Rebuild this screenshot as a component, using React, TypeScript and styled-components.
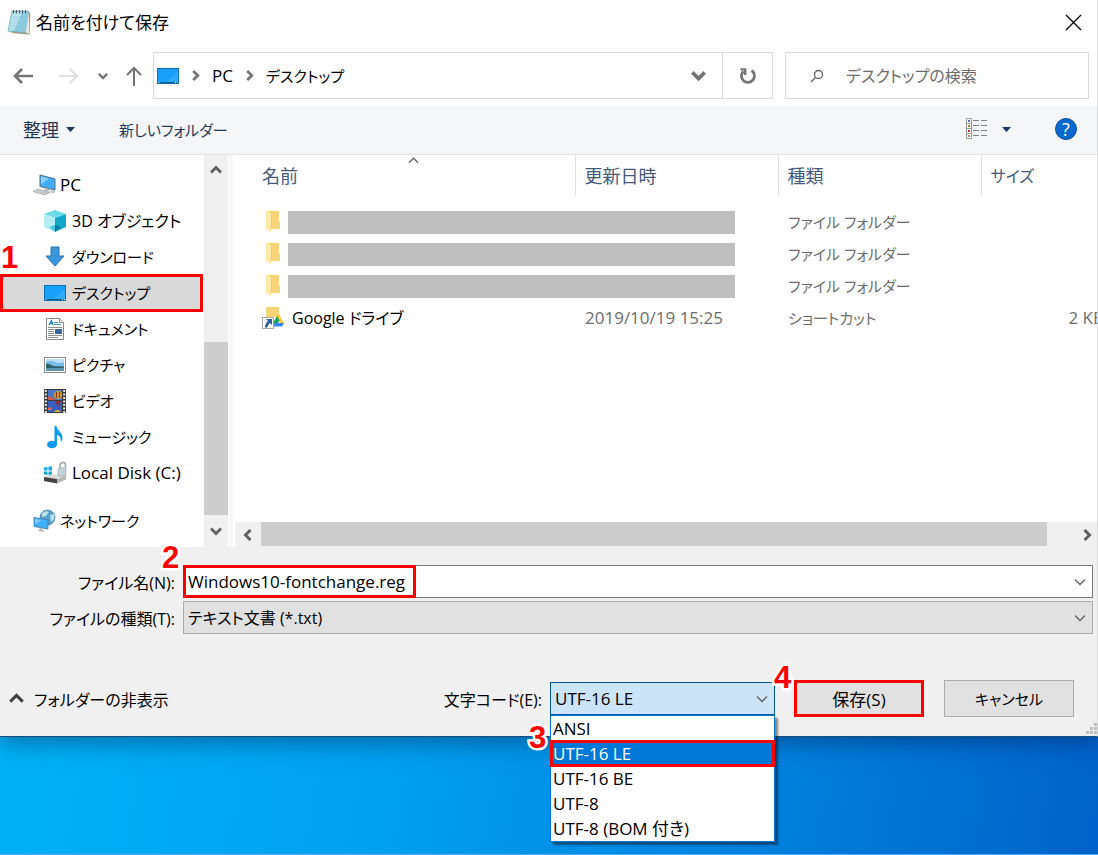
import React, { useState } from "react";
import styled, { createGlobalStyle, css } from "styled-components";

const RED = "#ff0000";

const GlobalStyle = createGlobalStyle`
  *, *::before, *::after { box-sizing: border-box; }
  body { margin: 0; }
  body, button, input, select {
    font-family: "Open Sans", "Noto Sans CJK JP", sans-serif;
    font-size: 17px;
    font-feature-settings: "palt";
    color: #000;
  }
  svg { display: block; flex: none; }
`;

const Desktop = styled.div`
  min-height: 100vh;
  overflow: hidden;
  border-bottom: 1px solid #5ba9e4;
  background: linear-gradient(100deg, #00b4f8 0%, #00b0f6 14%, #00a0f0 42%, #0084e0 70%, #0062cc 100%);
`;

const Dialog = styled.main`
  display: flex;
  flex-direction: column;
  background: #fff;
  border-right: 1px solid #dcdcdc;
  border-bottom: 1px solid #17507c;
  box-shadow: 0 3px 24px rgba(0, 20, 60, 0.5);
`;

const TitleBar = styled.header`
  display: flex;
  align-items: center;
  gap: 4px;
  height: 44px;
  padding: 0 14px 0 7px;
`;

const Title = styled.h1`
  flex: 1;
  margin: 0;
  padding-bottom: 2px;
  font-size: 17px;
  font-weight: 400;
`;

type TextSize = { $size?: 15 | 16 | 17 | 18 };

const PlainButton = styled.button<TextSize>`
  display: flex;
  align-items: center;
  justify-content: center;
  gap: 7px;
  padding: 0;
  border: 0;
  background: none;
  font-size: ${(p) => p.$size ?? 17}px;
`;

const ToggleButton = styled(PlainButton)`
  gap: 10px;
`;

const NavBar = styled.nav`
  display: flex;
  align-items: center;
  padding: 8px 8px 7px 13px;
`;

const NavButtons = styled.div`
  display: grid;
  grid-template-columns: 46px 39px 28px 27px;
  align-items: center;
  justify-items: start;
`;

const AddressBox = styled.div`
  display: flex;
  flex: 1;
  align-items: stretch;
  height: 47px;
  border: 1px solid #d9d9d9;
`;

const Crumbs = styled.div`
  display: flex;
  flex: 1;
  align-items: center;
  gap: 11px;
  padding: 0 16px 0 3px;
`;

const Crumb = styled.a<TextSize>`
  color: #000;
  font-size: ${(p) => p.$size ?? 17}px;
  text-decoration: none;
`;

const Spacer = styled.span`
  flex: 1;
`;

const RefreshButton = styled(PlainButton)`
  width: 50px;
  border-left: 1px solid #d9d9d9;
`;

const SearchBox = styled.label`
  display: flex;
  align-items: center;
  gap: 22px;
  width: 304px;
  height: 47px;
  margin-left: 12px;
  padding-left: 24px;
  border: 1px solid #d9d9d9;
`;

const SearchInput = styled.input`
  flex: 1;
  min-width: 0;
  padding: 0;
  border: 0;
  outline: 0;
  font-size: 16px;
  &::placeholder { color: #6d6d6d; opacity: 1; }
`;

const Toolbar = styled.div`
  display: flex;
  align-items: center;
  gap: 44px;
  height: 49px;
  padding: 0 20px 2px 23px;
  background: #f4f6f8;
  border-bottom: 1px solid #e2e4e6;
`;

const ToolButton = styled(PlainButton)`
  color: #1e395b;
`;

const Explorer = styled.div`
  display: grid;
  grid-template-columns: 203px 26px 4px minmax(0, 1fr);
`;

const Tree = styled.ul`
  margin: 0;
  padding: 12px 0 8px;
  list-style: none;
`;

const TreeItem = styled.li<{ $root?: boolean; $selected?: boolean }>`
  display: flex;
  align-items: center;
  gap: ${(p) => (p.$root ? 4 : 5)}px;
  height: 36px;
  padding-left: ${(p) => (p.$root ? 32 : 43)}px;
  ${(p) =>
    p.$selected &&
    css`
      position: relative;
      height: 38px;
      margin: -1px 0;
      background: #d9d9d9;
      outline: 3px solid ${RED};
      outline-offset: -3px;
    `}
  &:last-child { margin-top: 12px; }
`;

const TreeLink = styled.a<TextSize>`
  padding-bottom: 2px;
  color: #000;
  font-size: ${(p) => p.$size ?? 17}px;
  text-decoration: none;
  white-space: nowrap;
`;

const ScrollColumn = styled.div`
  display: grid;
  grid-template-rows: 30px 157px 173px 1fr;
  margin: 0 1px;
  background: #f0f0f0;
`;

const ScrollRow = styled.div`
  display: grid;
  grid-template-columns: 26px 1fr 30px 20px;
  height: 25px;
  margin-left: 2px;
  background: #f0f0f0;
`;

const Thumb = styled.div`
  background: #cdcdcd;
`;

const HorizontalThumb = styled(Thumb)`
  height: 24px;
`;

const Splitter = styled.div`
  background: #f7f7f7;
`;

const FilePane = styled.section`
  display: flex;
  flex-direction: column;
  justify-content: space-between;
  overflow: hidden;
`;

const FileTable = styled.table`
  width: calc(100% + 16px);
  table-layout: fixed;
  border-collapse: collapse;
  white-space: nowrap;
`;

const HeadCell = styled.th<TextSize>`
  position: relative;
  height: 41px;
  padding: 0 9px;
  border-right: 1px solid #e2e2e2;
  color: #43597a;
  font-size: ${(p) => p.$size ?? 18}px;
  font-weight: 400;
  line-height: 24px;
  text-align: left;
  &:first-child { padding-left: 29px; }
  &:last-child { border-right: 0; }
`;

const SortMark = styled.span`
  position: absolute;
  top: 0;
  left: 175px;
`;

const FileRow = styled.tr`
  height: 32px;
`;

const GapRow = styled.tr`
  height: 10px;
`;

const Cell = styled.td<TextSize & { $align?: "right" }>`
  padding: 0 9px 2px 10px;
  color: #6d6d6d;
  font-size: ${(p) => p.$size ?? 17}px;
  text-align: ${(p) => p.$align ?? "left"};
`;

const NameCell = styled.td`
  padding: 0 0 0 29px;
`;

const NameContent = styled.div`
  display: flex;
  align-items: center;
  gap: 4px;
`;

const FileLink = styled(TreeLink)`
  padding-left: 4px;
`;

const Redacted = styled.span`
  flex: 1;
  height: 23px;
  margin-right: 43px;
  background: #bfbfbf;
`;

const Footer = styled.form`
  display: flex;
  flex-direction: column;
  padding: 18px 4px 19px 0;
  background: #f0f0f0;
`;

const Fields = styled.div`
  display: grid;
  grid-template-columns: 175px minmax(0, 1fr);
  column-gap: 8px;
  row-gap: 3px;
  align-items: center;
`;

const FieldLabel = styled.label`
  font-size: 16px;
  text-align: right;
  white-space: nowrap;
`;

const FieldBox = styled.div`
  position: relative;
  display: flex;
`;

const FieldArrow = styled.span`
  position: absolute;
  right: 7px;
  top: 11px;
  pointer-events: none;
`;

const fieldStyle = css`
  width: 100%;
  height: 33px;
  padding: 0 4px;
  border: 1px solid #adadad;
  border-radius: 0;
  outline: 0;
  appearance: none;
`;

const NameInput = styled.input`
  ${fieldStyle}
  background: #fff;
  border-color: #7a7a7a;
`;

const Select = styled.select<TextSize & { $open?: boolean }>`
  ${fieldStyle}
  background: ${(p) => (p.$open ? "#cce4f7" : "#e1e1e1")};
  border-color: ${(p) => (p.$open ? "#005499" : "#adadad")};
  font-size: ${(p) => p.$size ?? 17}px;
`;

const InputFrame = styled.span`
  position: absolute;
  inset: 0 auto 0 0;
  width: 233px;
  border: 3px solid ${RED};
  pointer-events: none;
`;

const Actions = styled.div`
  display: flex;
  align-items: center;
  margin-top: 46px;
  padding: 0 19px 0 9px;
`;

const EncodingLabel = styled(FieldLabel)`
  margin-right: 8px;
`;

const EncodingBox = styled(FieldBox)`
  width: 225px;
  margin-right: 19px;
`;

const OptionList = styled.ul`
  position: absolute;
  z-index: 2;
  top: 33px;
  left: 0;
  right: 0;
  margin: 0;
  padding: 0;
  border: 1px solid #0078d7;
  background: #fff;
  box-shadow: 3px 3px 2px rgba(0, 0, 0, 0.45);
  list-style: none;
`;

const Option = styled.li<{ $selected: boolean }>`
  position: relative;
  z-index: ${(p) => (p.$selected ? 1 : 0)};
  height: 25px;
  padding-left: 2px;
  line-height: 25px;
  color: ${(p) => (p.$selected ? "#fff" : "#000")};
  background: ${(p) => (p.$selected ? "#0078d7" : "#fff")};
  outline: ${(p) => (p.$selected ? `3px solid ${RED}` : "0")};
  outline-offset: -2px;
`;

const ActionButton = styled.button<TextSize & { $marked?: boolean }>`
  width: 130px;
  height: 37px;
  margin-right: ${(p) => (p.$marked ? 20 : 0)}px;
  padding: 0;
  border: ${(p) => (p.$marked ? `3px solid ${RED}` : "1px solid #adadad")};
  background: #e1e1e1;
  font-size: ${(p) => p.$size ?? 17}px;
`;

const Anchor = styled.div`
  position: relative;
`;

const Step = styled.span<{ $x: number; $y: number }>`
  position: absolute;
  z-index: 3;
  left: ${(p) => p.$x}px;
  top: ${(p) => p.$y}px;
  color: ${RED};
  font: 700 31px/30px "Liberation Sans", sans-serif;
  -webkit-text-stroke: 5px #fff;
  paint-order: stroke fill;
  pointer-events: none;
`;

const Grip = styled.span`
  position: absolute;
  right: 0;
  bottom: 1px;
`;

type ChevronProps = { dir: "up" | "down" | "left" | "right"; size?: number; stroke?: number; color?: string };

const Chevron = ({ dir, size = 12, stroke = 3, color = "#606060" }: ChevronProps) => {
  const angle = { down: 0, left: 90, up: 180, right: 270 }[dir];
  return (
    <svg width={size} height={size} viewBox="0 0 12 12" fill="none" stroke={color} strokeWidth={stroke}>
      <path d="M1 3.5 6 8.5 11 3.5" transform={`rotate(${angle} 6 6)`} />
    </svg>
  );
};

const NotepadIcon = () => (
  <svg width="25" height="26" viewBox="0 0 25 26">
    <path d="M4 24 20.500 25.500H22.500L23.500 4 20 3Z" fill="#b59c78" />
    <path d="M5 2.500 22 2.500 20 24 1 22Z" fill="#8ecbdc" stroke="#6ba6b8" strokeWidth=".8" />
    <path d="M5.500 3 15 3 7 22 1.500 21.500Z" fill="#c9edf4" opacity=".75" />
    <path d="M19 22 22 3V24L20 24.500Z" fill="#eee7dc" />
    <path d="M5 8h15M4.500 11h15M4 14h15M3 17h15M3 20h15" stroke="#8ac6d6" strokeWidth=".6" />
    <path d="M6.500 1v3.500M9.500 1v3.500M12.500 1v3.500M15.500 1v3.500M18.500 1v3.500" stroke="#4c6068" strokeWidth="1.200" />
  </svg>
);

const DesktopIcon = () => (
  <svg width="22" height="16" viewBox="0 0 22 16">
    <rect x=".5" y=".5" width="21" height="15" fill="#18a0fb" stroke="#0a6fb5" />
    <path d="M9 14 21 4V14Z" fill="#3fb2ff" opacity=".6" />
    <path d="M1 14.500H21" stroke="#0b5c95" />
    <path d="M1.500 14.500h1M18 14.500h1M20 14.500h1" stroke="#fff" />
  </svg>
);

const PcIcon = () => (
  <svg width="23" height="22" viewBox="0 0 23 22">
    <path d="M7 1 22 5V16L7 12.500Z" fill="#43adf6" stroke="#4d6f86" />
    <path d="M8 2.500 16 4.500 8 10Z" fill="#8fd0fc" />
    <path d="M12 14 17 15.500 16 17.500 11 16.500Z" fill="#b6bcc1" />
    <path d="M0 17.500 5 15 17 18.500 12 21Z" fill="#c7cbcf" stroke="#9da3a8" strokeWidth=".7" />
    <path d="M17 17.500 21 16.500 22 18 19 19Z" fill="#d4d7da" stroke="#a3a7ab" strokeWidth=".6" />
  </svg>
);

const CubeIcon = () => (
  <svg width="24" height="24" viewBox="0 0 24 24">
    <path d="M1 5 12 1 23 5 12 9Z" fill="#6cd9e6" />
    <path d="M1 5 12 9V23L1 18Z" fill="#b4eef3" />
    <path d="M23 5 12 9V23L23 18Z" fill="#12a7ca" />
    <path d="M12 16 18 18 12 23Z" fill="#067b9f" />
    <path d="M12 16 6 18 12 23Z" fill="#49c6da" />
  </svg>
);

const DownloadIcon = () => (
  <svg width="24" height="22" viewBox="0 0 24 22">
    <path d="M8 1h8v9h5l-9 10L3 10h5Z" fill="#3c96dc" stroke="#2474b7" />
  </svg>
);

const DocumentIcon = () => (
  <svg width="24" height="24" viewBox="0 0 24 24">
    <path d="M3.500 1.500h13l4 4v17h-17Z" fill="#fff" stroke="#8a8a8a" />
    <path d="M16.500 1.500v4h4" fill="#e5e5e5" stroke="#8a8a8a" />
    <path d="M6 8 8.500 3.500 10 8M7 6.500h3" stroke="#1f84c9" fill="none" strokeWidth="1.300" />
    <path d="M11 5.500h4M11 7.500h7" stroke="#4c9fd8" />
    <path d="M5 10.500h14M5 12.500h6M5 14.500h6M5 16.500h6M5 18.500h14M5 20.500h10" stroke="#8e8e8e" />
    <rect x="12" y="12" width="7" height="5" fill="#39699b" />
  </svg>
);

const PictureIcon = () => (
  <svg width="24" height="18" viewBox="0 0 24 18">
    <rect x="1.500" y="1.500" width="21" height="15" fill="#fff" stroke="#8c8c8c" />
    <rect x="3" y="3" width="18" height="12" fill="#77bdea" />
    <path d="M3 6Q8 4 12 6T21 6V3H3Z" fill="#b9e0f6" />
    <path d="M3 8Q6 7 10 10L21 10.500V12H3Z" fill="#31606a" />
    <path d="M3 12H21V15H3Z" fill="#5f97b1" />
  </svg>
);

const VideoIcon = () => (
  <svg width="24" height="24" viewBox="0 0 24 24">
    <rect x="1" width="22" height="24" fill="#3c3c3c" />
    <path d="M2.800 1V24M21.200 1V24" stroke="#e6e6e6" strokeWidth="2" strokeDasharray="2 1.500" />
    <rect x="5" y="1" width="14" height="10" fill="#4776cc" />
    <rect x="5" y="12" width="14" height="11" fill="#365fbf" />
    <path d="M5 8 8 7 10 9 12 10V11H5Z" fill="#cc5a49" />
    <circle cx="15" cy="6" r="4" fill="#d0a426" />
    <path d="M13.500 3v6M16.500 3v6" stroke="#8d3324" strokeWidth="1.200" />
    <path d="M12 12h6l-2 5h-1Z" fill="#912c35" />
    <path d="M5 19 8 18 9 21H5Z" fill="#e76853" />
    <path d="M11 23a4 4 0 0 1 7 0Z" fill="#e5b829" />
  </svg>
);

const MusicIcon = () => (
  <svg width="24" height="24" viewBox="0 0 24 24">
    <ellipse cx="9" cy="19.500" rx="5" ry="3.800" fill="#0f9bef" />
    <path d="M11.500 1H13.500C14 6 20 7 19.500 14 19.500 15 18.500 16.500 17.500 17 19 12 15.500 10.500 14 10V19.500H11.500Z" fill="#0f9bef" />
  </svg>
);

const DiskIcon = () => (
  <svg width="24" height="24" viewBox="0 0 24 24">
    <path d="M1 6.500 4.500 6V9.500H1ZM5.500 5.800 9 5.300V9.500H5.500ZM1 10.500H4.500V14L1 13.500ZM5.500 10.500H9V14.500L5.500 14.200Z" fill="#16a6e8" />
    <path d="M1 16 9 13 23 14.500 14 18Z" fill="#dcdcdc" />
    <path d="M1 16 14 18V22.500L1 20Z" fill="#444" />
    <path d="M14 18 23 14.500V18.500L14 22.500Z" fill="#b5b5b5" />
    <path d="M17 7V4Q17.500 1.500 20 1.500T22.500 4V6" fill="none" stroke="#a5a5a5" strokeWidth="1.500" />
    <path d="M15 7.500 23 6V14.500L15 15Z" fill="#c4cfd6" stroke="#9aa7af" strokeWidth=".6" />
  </svg>
);

const NetworkIcon = () => (
  <svg width="23" height="24" viewBox="0 0 23 24">
    <circle cx="14.500" cy="8.500" r="7.500" fill="#5a9fc8" stroke="#39779f" strokeWidth=".7" />
    <path d="M9 4Q13 1 16 3L13 7 9 8ZM17 6 21 5 21.500 10 18 13Z" fill="#b9e3ef" />
    <path d="M1 8.500 15 11V20L1 17.500Z" fill="#3fb0fa" stroke="#3b7cab" strokeWidth=".8" />
    <path d="M2 10 9 11 2 15Z" fill="#7fcdfc" />
    <path d="M7 19 10 19.500V21.500L12 23 5 22Z" fill="#b7bdc3" />
  </svg>
);

const FolderIcon = () => (
  <svg width="22" height="24" viewBox="0 0 22 24">
    <path d="M4 1H17V12H18V19H9L4 18Z" fill="#f8d476" />
    <path d="M4 1 9 3V22L4 19Z" fill="#ffe9a6" />
    <path d="M9 3 10 13 9 19Z" fill="#eac45c" />
  </svg>
);

const DriveIcon = () => (
  <svg width="22" height="24" viewBox="0 0 22 24">
    <path d="M4 1H17V11H4Z" fill="#f8d476" />
    <path d="M14 10 17 8 22 17H18Z" fill="#fdcd3d" />
    <path d="M15 10 17.500 14.500 14 20 11 17Z" fill="#1ba260" />
    <path d="M13 17H22L20 20.500H11Z" fill="#3b82f2" />
    <rect x=".5" y="11.500" width="11" height="11" fill="#fff" stroke="#a8a8a8" />
    <path d="M4 13h6v6l-2-2Q5.500 18.500 5.500 21.500H3Q3 17.500 6 15Z" fill="#2b5f9e" />
  </svg>
);

const ArrowIcon = ({ kind }: { kind: "back" | "forward" | "up" }) => {
  const paths = { back: "M20 10H2M9 3 2 10 9 17", forward: "M0 10H18M11 3 18 10 11 17", up: "M8 20V2M1 9 8 2 15 9" };
  return (
    <svg width={kind === "up" ? 16 : 20} height="20" viewBox={kind === "up" ? "0 0 16 20" : "0 0 20 20"} fill="none"
      stroke={kind === "forward" ? "#dedede" : "#757575"} strokeWidth={kind === "back" ? 2.6 : 2}>
      <path d={paths[kind]} />
    </svg>
  );
};

const RefreshIcon = () => (
  <svg width="18" height="18" viewBox="0 0 18 18" fill="none" stroke="#757575" strokeWidth="2.800">
    <path d="M12.500 3.500A6.500 6.500 0 1 1 4.500 4.200" />
    <path d="M1.500 2.400H6.200V8" strokeWidth="2.400" />
  </svg>
);

const SearchIcon = () => (
  <svg width="14" height="14" viewBox="0 0 14 14" fill="none" stroke="#606060" strokeWidth="1.300">
    <circle cx="8.500" cy="5.500" r="4" />
    <path d="M5.500 8.500 1 13" />
  </svg>
);

const ViewIcon = () => (
  <svg width="22" height="22" viewBox="0 0 22 22">
    <path d="M.5 .5h5v20h-5ZM.5 5.500h5M.5 10.500h5M.5 15.500h5" fill="#fff" stroke="#9b9b9b" />
    <path d="M7 2.500h6M15 2.500h6M7 7.500h6M15 7.500h6M7 12.500h6M15 12.500h6M7 17.500h6M15 17.500h6" stroke="#808080" />
    <path d="M2 3h2" stroke="#3f79b8" strokeWidth="2" />
    <path d="M2 8h2" stroke="#9a7c32" strokeWidth="2" />
    <path d="M2 13h2" stroke="#c32b2b" strokeWidth="2" />
    <path d="M2 18h2" stroke="#93a03e" strokeWidth="2" />
  </svg>
);

const DropMark = () => (
  <svg width="9" height="5" viewBox="0 0 9 5">
    <path d="M0 0H9L4.500 5Z" fill="#17375e" />
  </svg>
);

const HelpMark = styled.span`
  width: 22px;
  height: 22px;
  border: 1px solid #0b4f94;
  border-radius: 50%;
  background: #0a69cf;
  color: #fff;
  font-size: 18px;
  line-height: 20px;
  text-align: center;
`;

const ViewTools = styled.div`
  display: flex;
  align-items: center;
  gap: 14px;
  margin-left: auto;
`;

const TreeIcon = styled.span`
  display: flex;
  justify-content: center;
  width: 24px;
`;

type Place = { label: string; icon: React.ReactNode; size?: 15 | 16 | 17; root?: boolean; selected?: boolean };

const places: Place[] = [
  { label: "PC", icon: <PcIcon />, root: true },
  { label: "3D オブジェクト", icon: <CubeIcon />, size: 16 },
  { label: "ダウンロード", icon: <DownloadIcon />, size: 15 },
  { label: "デスクトップ", icon: <DesktopIcon />, size: 15, selected: true },
  { label: "ドキュメント", icon: <DocumentIcon />, size: 15 },
  { label: "ピクチャ", icon: <PictureIcon />, size: 15 },
  { label: "ビデオ", icon: <VideoIcon />, size: 15 },
  { label: "ミュージック", icon: <MusicIcon />, size: 15 },
  { label: "Local Disk (C:)", icon: <DiskIcon /> },
  { label: "ネットワーク", icon: <NetworkIcon />, size: 15, root: true },
];

const encodings = ["ANSI", "UTF-16 LE", "UTF-16 BE", "UTF-8", "UTF-8 (BOM 付き)"];

export default function App() {
  const [encoding, setEncoding] = useState("UTF-16 LE");
  const [fileName, setFileName] = useState("Windows10-fontchange.reg");

  return (
    <Desktop>
      <GlobalStyle />
      <Dialog>
        <TitleBar>
          <NotepadIcon />
          <Title>名前を付けて保存</Title>
          <PlainButton aria-label="閉じる">
            <svg width="20" height="20" viewBox="0 0 20 20" stroke="#000" strokeWidth="1.300">
              <path d="M3 3 18 18M18 3 3 18" />
            </svg>
          </PlainButton>
        </TitleBar>

        <NavBar>
          <NavButtons>
            <PlainButton aria-label="戻る"><ArrowIcon kind="back" /></PlainButton>
            <PlainButton aria-label="進む"><ArrowIcon kind="forward" /></PlainButton>
            <PlainButton aria-label="履歴"><Chevron dir="down" size={10} color="#757575" /></PlainButton>
            <PlainButton aria-label="上へ"><ArrowIcon kind="up" /></PlainButton>
          </NavButtons>
          <AddressBox>
            <Crumbs>
              <DesktopIcon />
              <Chevron dir="right" size={11} color="#757575" />
              <Crumb href="#pc">PC</Crumb>
              <Chevron dir="right" size={11} color="#757575" />
              <Crumb href="#desktop" $size={15}>デスクトップ</Crumb>
              <Spacer />
              <Chevron dir="down" size={15} color="#757575" />
            </Crumbs>
            <RefreshButton aria-label="更新"><RefreshIcon /></RefreshButton>
          </AddressBox>
          <SearchBox>
            <SearchIcon />
            <SearchInput aria-label="検索" placeholder="デスクトップの検索" />
          </SearchBox>
        </NavBar>

        <Toolbar>
          <ToolButton $size={18}>整理<DropMark /></ToolButton>
          <ToolButton $size={15}>新しいフォルダー</ToolButton>
          <ViewTools>
            <ToolButton aria-label="表示"><ViewIcon /></ToolButton>
            <ToolButton aria-label="表示オプション"><DropMark /></ToolButton>
          </ViewTools>
          <PlainButton aria-label="ヘルプ"><HelpMark>?</HelpMark></PlainButton>
        </Toolbar>

        <Explorer>
          <Tree>
            {places.map((place) => (
              <TreeItem key={place.label} $root={place.root} $selected={place.selected}>
                {place.selected && <Step $x={1} $y={-31}>1</Step>}
                <TreeIcon>{place.icon}</TreeIcon>
                <TreeLink href="#place" $size={place.size}>{place.label}</TreeLink>
              </TreeItem>
            ))}
          </Tree>
          <ScrollColumn>
            <PlainButton aria-label="上へスクロール"><Chevron dir="up" /></PlainButton>
            <span />
            <Thumb />
            <PlainButton aria-label="下へスクロール"><Chevron dir="down" /></PlainButton>
          </ScrollColumn>
          <Splitter />
          <FilePane>
            <FileTable>
              <colgroup>
                <col />
                <col width="203" />
                <col width="203" />
                <col width="132" />
              </colgroup>
              <thead>
                <tr>
                  <HeadCell>
                    <SortMark><Chevron dir="up" size={11} stroke={1.3} /></SortMark>
                    名前
                  </HeadCell>
                  <HeadCell>更新日時</HeadCell>
                  <HeadCell>種類</HeadCell>
                  <HeadCell $size={16}>サイズ</HeadCell>
                </tr>
              </thead>
              <tbody>
                <GapRow aria-hidden="true" />
                {[1, 2, 3].map((n) => (
                  <FileRow key={n}>
                    <NameCell colSpan={2}>
                      <NameContent><FolderIcon /><Redacted /></NameContent>
                    </NameCell>
                    <Cell $size={15}>ファイル フォルダー</Cell>
                    <Cell />
                  </FileRow>
                ))}
                <FileRow>
                  <NameCell>
                    <NameContent><DriveIcon /><FileLink href="#drive" $size={16}>Google ドライブ</FileLink></NameContent>
                  </NameCell>
                  <Cell>2019/10/19 15:25</Cell>
                  <Cell $size={15}>ショートカット</Cell>
                  <Cell $align="right">2 KB</Cell>
                </FileRow>
              </tbody>
            </FileTable>
            <ScrollRow>
              <PlainButton aria-label="左へスクロール"><Chevron dir="left" /></PlainButton>
              <HorizontalThumb />
              <span />
              <PlainButton aria-label="右へスクロール"><Chevron dir="right" /></PlainButton>
            </ScrollRow>
          </FilePane>
        </Explorer>

        <Anchor>
          <Footer onSubmit={(e) => e.preventDefault()}>
            <Fields>
              <FieldLabel htmlFor="file-name">ファイル名(N):</FieldLabel>
              <FieldBox>
                <NameInput id="file-name" value={fileName} onChange={(e) => setFileName(e.target.value)} />
                <InputFrame />
                <Step $x={-21} $y={-22}>2</Step>
                <FieldArrow><Chevron dir="down" stroke={1.3} /></FieldArrow>
              </FieldBox>
              <FieldLabel htmlFor="file-type">ファイルの種類(T):</FieldLabel>
              <FieldBox>
                <Select id="file-type" $size={16}><option>テキスト文書 (*.txt)</option></Select>
                <FieldArrow><Chevron dir="down" stroke={1.3} /></FieldArrow>
              </FieldBox>
            </Fields>
            <Actions>
              <ToggleButton type="button" $size={16}>
                <Chevron dir="up" size={15} stroke={2.4} color="#404040" />
                フォルダーの非表示
              </ToggleButton>
              <Spacer />
              <EncodingLabel htmlFor="encoding">文字コード(E):</EncodingLabel>
              <EncodingBox>
                <Select id="encoding" $open value={encoding} onChange={(e) => setEncoding(e.target.value)}>
                  {encodings.map((name) => <option key={name}>{name}</option>)}
                </Select>
                <FieldArrow><Chevron dir="down" stroke={1.3} /></FieldArrow>
                <OptionList role="listbox" aria-label="文字コード">
                  {encodings.map((name) => (
                    <Option key={name} role="option" aria-selected={name === encoding}
                      $selected={name === encoding} onClick={() => setEncoding(name)}>
                      {name}
                    </Option>
                  ))}
                </OptionList>
                <Step $x={-21} $y={41}>3</Step>
                <Step $x={224} $y={-19}>4</Step>
              </EncodingBox>
              <ActionButton type="submit" $marked>保存(S)</ActionButton>
              <ActionButton type="button" $size={15}>キャンセル</ActionButton>
            </Actions>
          </Footer>
          <Grip>
            <svg width="12" height="12" viewBox="0 0 12 12" fill="#bfbfbf">
              <path d="M9 0h3v3H9ZM5 4h3v3H5ZM9 4h3v3H9ZM1 8h3v3H1ZM5 8h3v3H5ZM9 8h3v3H9Z" />
            </svg>
          </Grip>
        </Anchor>
      </Dialog>
    </Desktop>
  );
}
